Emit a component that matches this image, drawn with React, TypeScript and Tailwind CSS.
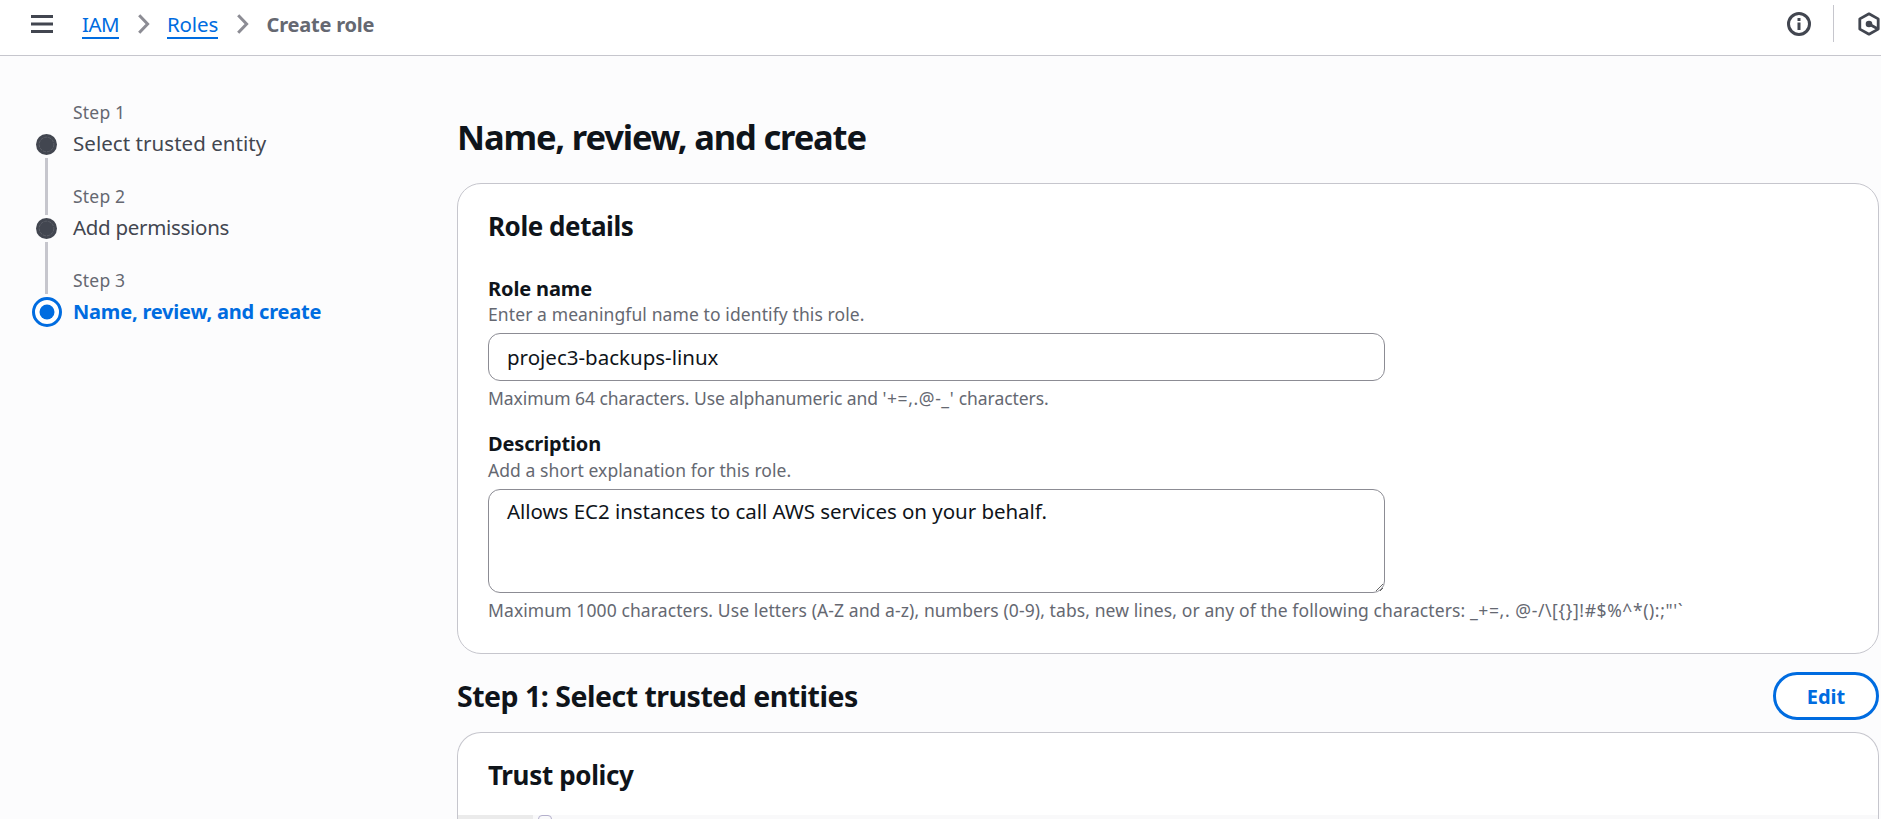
import type { ReactNode } from 'react';

function Hint({ children, className = '' }: { children: ReactNode; className?: string }) {
  return (
    <p className={`whitespace-pre text-[17.5px] leading-6 text-[#656871] ${className}`}>{children}</p>
  );
}

function Chevron() {
  return (
    <svg width="12" height="20" viewBox="0 0 12 20" fill="none" stroke="#8c8c94" strokeWidth="3">
      <path d="M1.2 1.2 9.6 10 1.2 18.8" />
    </svg>
  );
}

function Header() {
  return (
    <header className="flex h-14 shrink-0 items-start border-b border-[#c6c6cd] bg-white">
      <svg className="mt-[15px] ml-[31px] shrink-0" width="22" height="18" viewBox="0 0 22 18" fill="none" stroke="#424650" strokeWidth="3">
        <path d="M0 1.5h22M0 9h22M0 16.5h22" />
      </svg>
      <nav className="mt-[9px] ml-[29px] flex items-start text-[20.5px] leading-[30px]">
        <a className="h-[30px] w-[37px] border-b-2 border-[#006ce0] tracking-[-0.5px] whitespace-nowrap text-[#006ce0]">IAM</a>
        <span className="mt-[5px] ml-[18.5px]"><Chevron /></span>
        <a className="ml-[17.5px] h-[30px] w-[51px] border-b-2 border-[#006ce0] tracking-[-0.15px] whitespace-nowrap text-[#006ce0]">Roles</a>
        <span className="mt-[5px] ml-[18.5px]"><Chevron /></span>
        <span className="mt-px ml-[18px] text-[20px] font-bold tracking-[-0.2px] text-[#656871]">Create role</span>
      </nav>
      <div className="mt-[5px] ml-auto flex h-[37px] items-start">
        <svg className="mt-[7px]" width="24" height="24" viewBox="0 0 24 24" fill="none" stroke="#424650" strokeWidth="3">
          <circle cx="12" cy="12" r="10.5" />
          <path d="M12 10.5v7.5M12 6v3" />
        </svg>
        <div className="ml-[22px] h-[37px] w-px bg-[#c6c6cd]" />
        <svg className="mt-[7px] ml-[24px]" width="23" height="24" viewBox="0 0 23 24" fill="none" stroke="#424650" strokeWidth="2.8">
          <path d="M11 1.8 20.2 6.9v10.2L11 22.2 1.8 17.1V6.9z" strokeLinejoin="round" />
          <circle cx="11" cy="12" r="3.3" fill="#424650" stroke="none" />
          <path d="m11 12 9 5" />
        </svg>
      </div>
    </header>
  );
}

const steps = [
  { label: 'Step 1', title: 'Select trusted entity', rail: 'h-[31px]', tracking: 'tracking-[0.05px]' },
  { label: 'Step 2', title: 'Add permissions', rail: 'h-[31px] bg-[#c6c6cd]', tracking: 'tracking-[-0.3px]' },
  { label: 'Step 3', title: 'Name, review, and create', rail: 'h-[26px] bg-[#c6c6cd]', active: true },
];

function Steps() {
  return (
    <ol className="w-[457px] shrink-0 pt-[44px] pl-[31px]">
      {steps.map((s) => (
        <li key={s.label} className="flex h-[84px]">
          <div className="flex w-[31px] shrink-0 flex-col items-center">
            <div className={`w-[3px] shrink-0 ${s.rail}`} />
            {s.active ? (
              <svg className="mt-[3px] shrink-0" width="30" height="30" viewBox="0 0 30 30">
                <circle cx="15" cy="15" r="13.5" fill="#fff" stroke="#006ce0" strokeWidth="3" />
                <circle cx="15" cy="15" r="7.5" fill="#006ce0" />
              </svg>
            ) : (
              <>
                <svg className="mt-[3px] shrink-0" width="21" height="21" viewBox="0 0 21 21">
                  <circle cx="10.5" cy="10.5" r="10.5" fill="#424650" />
                  <circle cx="10.5" cy="10.5" r="7.3" fill="none" stroke="#656871" strokeWidth="0.7" strokeDasharray="3 1" />
                </svg>
                <div className="mt-[3px] w-[3px] grow bg-[#c6c6cd]" />
              </>
            )}
          </div>
          <div className="ml-[11px] whitespace-nowrap">
            <Hint className="tracking-[0.2px]">{s.label}</Hint>
            {s.active ? (
              <p className="mt-[5px] text-[20px] leading-[30px] font-bold tracking-[-0.2px] text-[#006ce0]">{s.title}</p>
            ) : (
              <p className={`mt-[4px] text-[20.5px] leading-[30px] text-[#424650] ${s.tracking}`}>{s.title}</p>
            )}
          </div>
        </li>
      ))}
    </ol>
  );
}

export default function App() {
  return (
    <div className="flex h-[819px] w-[1881px] flex-col overflow-hidden bg-[#fcfcfd] font-['Noto_Sans',sans-serif] text-[#0f141a]">
      <Header />
      <div className="flex min-h-0 grow">
        <Steps />
        <main className="w-[1422px] shrink-0 pt-[58px]">
          <h1 className="h-[69px] text-[34.5px] leading-[46px] font-bold tracking-[-1.15px]">Name, review, and create</h1>
          <section className="h-[471px] rounded-[24px] border border-[#c6c6cd] bg-white px-[30px] pt-[24px]">
            <h2 className="text-[26px] leading-9 font-bold tracking-[-0.45px]">Role details</h2>
            <div className="mt-[30px] w-[898px]">
              <p className="text-[20px] leading-[30px] font-bold tracking-[-0.12px]">Role name</p>
              <Hint className="-mt-[2px] tracking-[0.1px]">Enter a meaningful name to identify this role.</Hint>
              <input
                readOnly
                value="projec3-backups-linux"
                className="mt-[7px] block h-[48px] w-[897px] rounded-[12px] border border-[#8c8c94] bg-white px-[18px] text-[20.5px]"
              />
              <Hint className="mt-[5px] tracking-[-0.06px]">
                Maximum 64 characters. Use alphanumeric and <span className="tracking-[0.6px]">'+=,.@-_'</span> characters.
              </Hint>
            </div>
            <div className="mt-[19px] w-[898px]">
              <p className="text-[20px] leading-[30px] font-bold tracking-[-0.15px]">Description</p>
              <Hint className="-mt-px tracking-[0.08px]">Add a short explanation for this role.</Hint>
              <textarea
                readOnly
                value="Allows EC2 instances to call AWS services on your behalf."
                className="mt-[7px] block h-[104px] w-[897px] rounded-[12px] border border-[#8c8c94] bg-white px-[18px] py-[6px] text-[20.5px] leading-[30px] tracking-[-0.04px]"
              />
              <Hint className="mt-[5px] tracking-[0.1px]">
                {'Maximum 1000 characters. Use letters (A-Z and a-z), numbers (0-9), tabs, new lines, or any of the following characters: '}
                <span className="tracking-[0.6px]">{'_+=,. @-/\\[{}]!#$%^*():;"\'`'}</span>
              </Hint>
            </div>
          </section>
          <div className="flex h-[78px] items-start justify-between pt-[18px]">
            <h2 className="mt-[6px] text-[28.5px] leading-9 font-bold tracking-[-0.5px]">Step 1: Select trusted entities</h2>
            <button className="h-[48px] w-[106px] rounded-full border-3 border-[#006ce0] bg-white pt-[2px] text-[20px] font-bold text-[#006ce0]">Edit</button>
          </div>
          <section className="h-[140px] rounded-t-[24px] border border-b-0 border-[#c6c6cd] bg-white">
            <h2 className="h-[82px] px-[30px] pt-[24px] text-[26px] leading-9 font-bold tracking-[-0.35px]">Trust policy</h2>
            <div className="flex h-[30px] bg-[#f9f9fa]">
              <div className="w-[75px] bg-[#ebebeb]" />
              <div className="ml-[5px] h-[16px] w-[14px] rounded-[4px] border border-[#b4b0cc]" />
            </div>
          </section>
        </main>
      </div>
    </div>
  );
}
